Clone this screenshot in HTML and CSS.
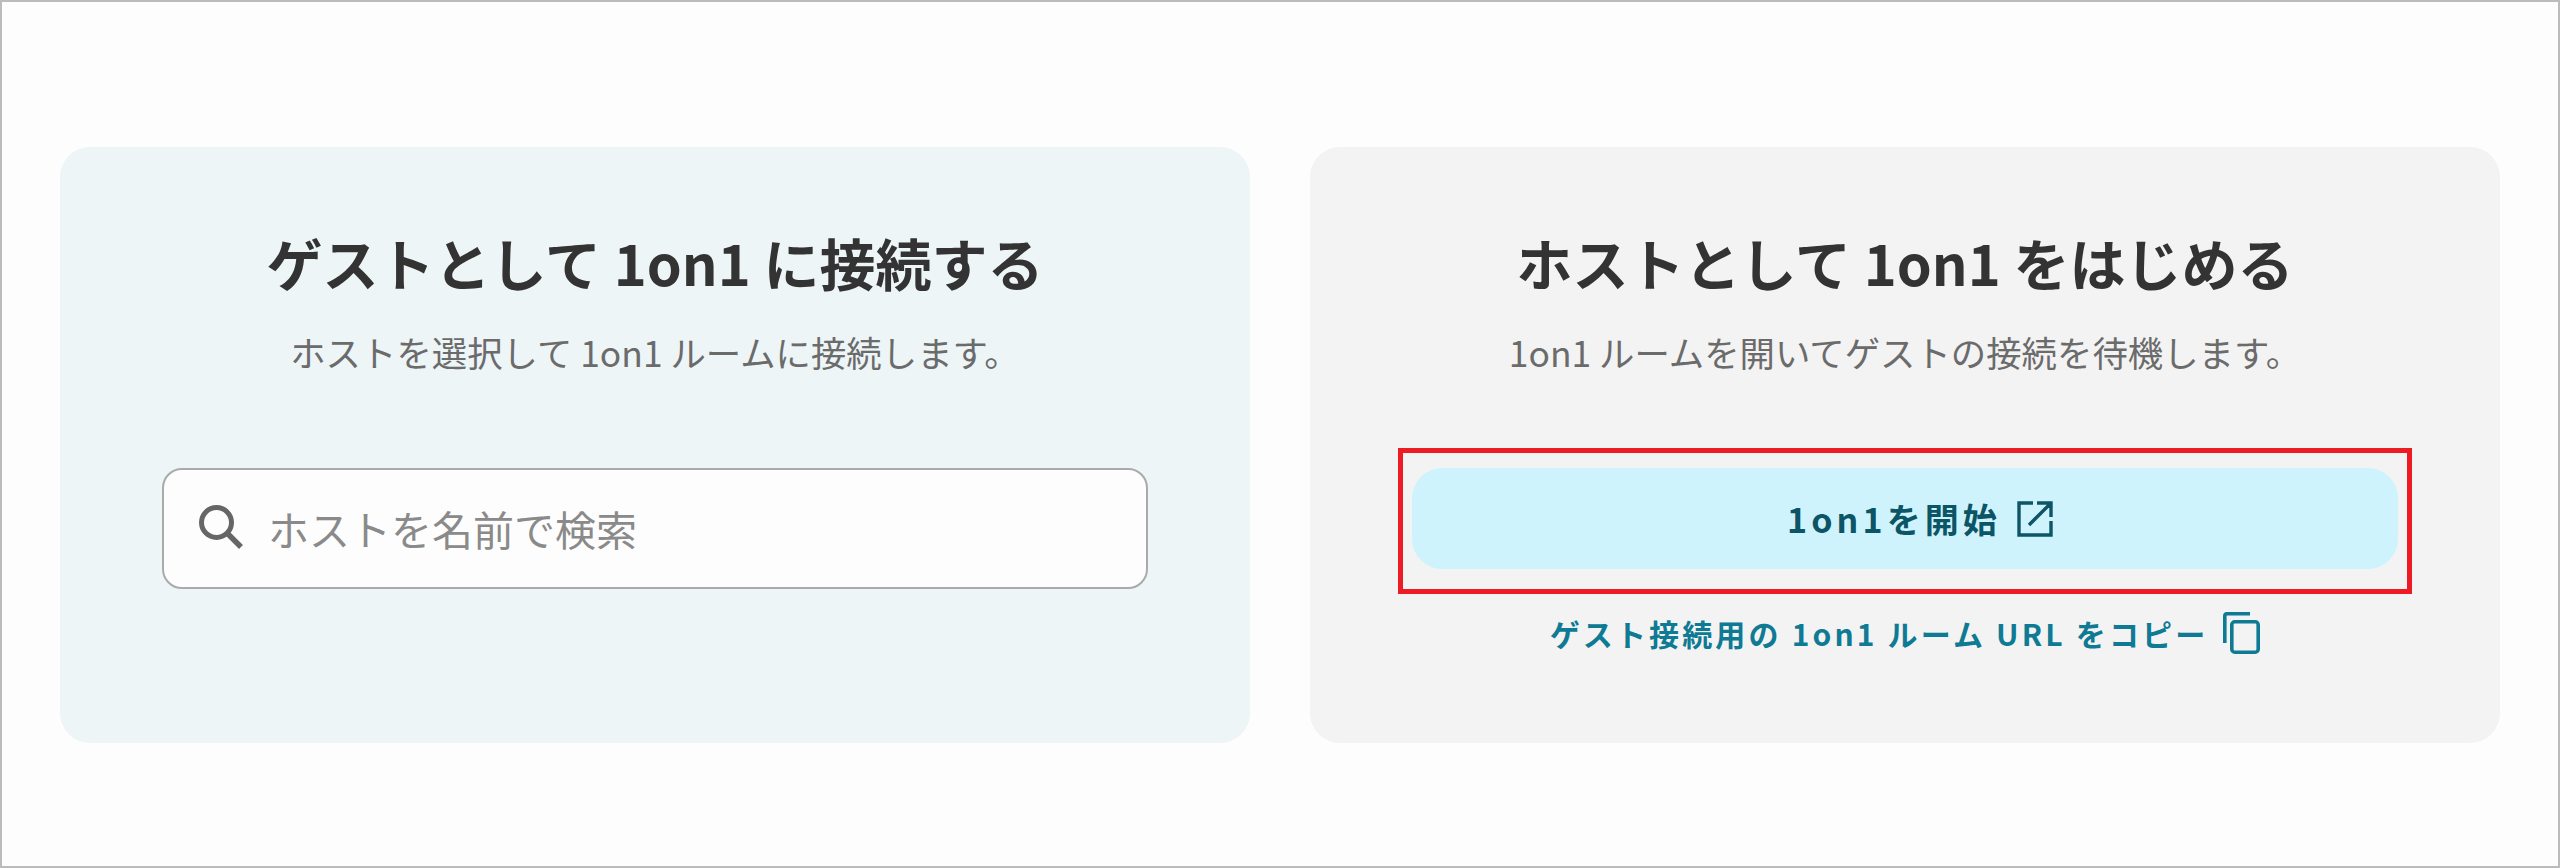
FILE: index.html
```html
<!DOCTYPE html>
<html lang="ja">
<head>
<meta charset="utf-8">
<title>1on1</title>
<link rel="stylesheet" href="styles.css">
</head>
<body>
<main class="page">
  <section class="card card-guest">
    <h2 class="title">ゲストとして 1on1 に接続する</h2>
    <p class="desc">ホストを選択して 1on1 ルームに接続します。</p>
    <div class="search">
      <svg class="search-icon" viewBox="0 0 44 44" aria-hidden="true"><circle cx="17.5" cy="17.5" r="15" fill="none" stroke="#666" stroke-width="5"/><path d="M28 28 L42 42" fill="none" stroke="#666" stroke-width="5.5"/></svg>
      <span class="placeholder">ホストを名前で検索</span>
    </div>
  </section>
  <section class="card card-host">
    <h2 class="title">ホストとして 1on1 をはじめる</h2>
    <p class="desc">1on1 ルームを開いてゲストの接続を待機します。</p>
    <div class="action">
      <button class="start" type="button">
        <span>1on1を開始</span>
        <svg class="start-icon" viewBox="0 0 36 36" aria-hidden="true"><path d="M16 2 H2 V34 H34 V20 M20 2 H34 V16 M33 3 L12 24" fill="none" stroke="#0c5566" stroke-width="3.4"/></svg>
      </button>
      <span class="highlight"></span>
    </div>
    <div class="copy">
      <span>ゲスト接続用の 1on1 ルーム URL をコピー</span>
      <svg class="copy-icon" viewBox="0 0 37 42" aria-hidden="true"><path d="M27 1.8 H4 Q1.8 1.8 1.8 4 V31" fill="none" stroke="#0f7a94" stroke-width="3.6"/><rect x="8.8" y="9.8" width="26.4" height="30.4" rx="3" fill="none" stroke="#0f7a94" stroke-width="3.6"/></svg>
    </div>
  </section>
</main>
</body>
</html>
```
FILE: styles.css
```css
* { box-sizing: border-box; }
html, body { margin: 0; padding: 0; }
body {
  font-family: "Noto Sans CJK JP", "Noto Sans", sans-serif;
  background: #fdfdfd;
}
.page {
  width: 2560px;
  height: 868px;
  border: 2px solid #bcbcbc;
  background: #fdfdfd;
  padding: 145px 58px 123px;
  display: flex;
  gap: 60px;
}
.card {
  flex: 1;
  border-radius: 30px;
  padding: 74px 102px 0;
  display: flex;
  flex-direction: column;
  align-items: center;
}
.card-guest { background: #edf5f7; }
.card-host { background: #f3f3f3; }
.title {
  margin: 0;
  font-size: 56px;
  line-height: 82px;
  font-weight: 700;
  color: #333;
}
.desc {
  margin: 24px 0 0;
  font-size: 35.4px;
  line-height: 50px;
  font-weight: 400;
  color: #6b6b6b;
}
.search {
  margin-top: 91px;
  width: 100%;
  height: 121px;
  border: 2px solid #aaa;
  border-radius: 20px;
  background: #fdfdfd;
  display: flex;
  align-items: center;
  padding-left: 35px;
  gap: 25px;
}
.search-icon { width: 44px; height: 44px; flex: none; margin-bottom: 4px; }
.placeholder { font-size: 41px; color: #8a8a8a; margin-bottom: 2px; }
.action {
  position: relative;
  margin-top: 91px;
  width: 100%;
}
.start {
  width: 100%;
  height: 101px;
  border: 0;
  border-radius: 30px;
  background: #cff3fc;
  font: inherit;
  font-size: 34px;
  font-weight: 700;
  letter-spacing: 4.1px;
  color: #0c5566;
  padding: 0 0 0 30px;
  display: flex;
  align-items: center;
  justify-content: center;
  gap: 16px;
}
.start-icon { width: 36px; height: 36px; flex: none; }
.highlight {
  position: absolute;
  left: -14px;
  right: -14px;
  top: -20px;
  bottom: -25px;
  border: 5px solid #ed1c24;
}
.copy {
  margin-top: 42px;
  display: flex;
  align-items: center;
  gap: 15px;
  font-size: 30px;
  font-weight: 700;
  letter-spacing: 3.15px;
  color: #0f7a94;
}
.copy-icon { width: 37px; height: 42px; flex: none; }
```
